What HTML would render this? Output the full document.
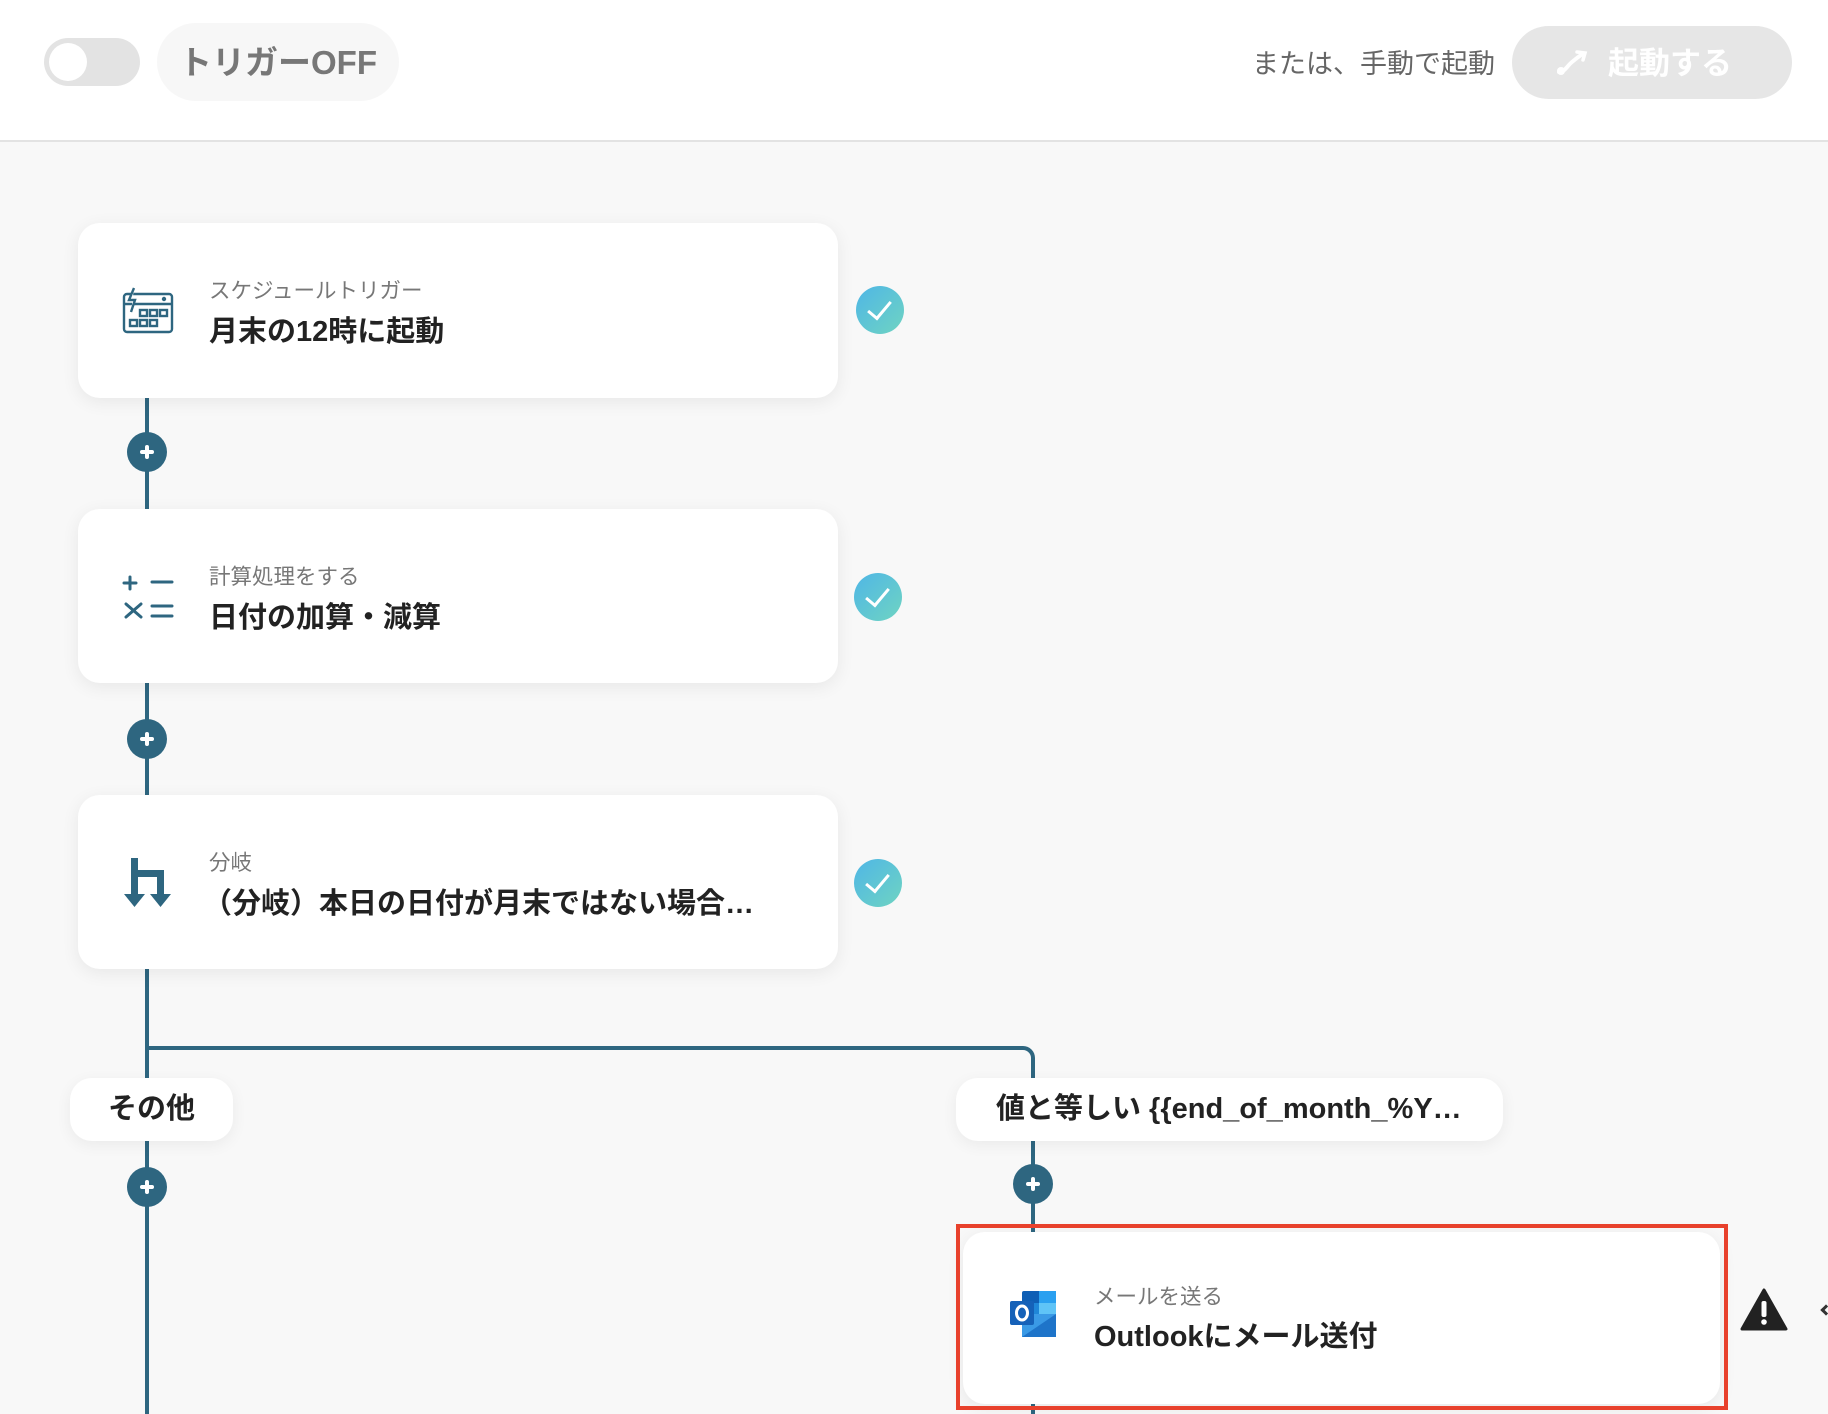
<!DOCTYPE html>
<html><head><meta charset="utf-8"><style>
*{margin:0;padding:0;box-sizing:border-box}
body{width:1828px;height:1414px;overflow:hidden;background:#f8f8f8;font-family:"Liberation Sans","Noto Sans CJK JP",sans-serif;position:relative}
.hdr{position:absolute;left:0;top:0;width:1828px;height:142px;background:#fff;border-bottom:2px solid #e3e3e3}
.abs{position:absolute}
.card{position:absolute;background:#fff;border-radius:22px;box-shadow:0 4px 18px rgba(0,0,0,0.07)}
.sub{position:absolute;font-size:21.5px;color:#777;white-space:nowrap}
.ttl{position:absolute;font-size:29px;font-weight:bold;color:#222;white-space:nowrap}
.chk{position:absolute;width:48px;height:48px;border-radius:50%;background:linear-gradient(135deg,#4fb6e6,#6fd4c2)}
.chk:after{content:"";position:absolute;left:17px;top:10px;width:10px;height:20px;border-right:3px solid #fff;border-bottom:3px solid #fff;transform:rotate(40deg)}
.plus{position:absolute;width:40px;height:40px;border-radius:50%;background:#2e6680}
.plus:before{content:"";position:absolute;left:13px;top:18px;width:14px;height:4px;background:#fff;border-radius:2px}
.plus:after{content:"";position:absolute;left:18px;top:13px;width:4px;height:14px;background:#fff;border-radius:2px}
.vl{position:absolute;width:4px;background:#2e6680}
.pill{position:absolute;background:#fff;border-radius:22px;box-shadow:0 4px 16px rgba(0,0,0,0.06);font-size:29px;font-weight:bold;color:#222;white-space:nowrap}
</style></head><body>
<div class="hdr"></div>
<div class="abs" style="left:44px;top:38px;width:96px;height:48px;border-radius:24px;background:#e3e3e3"></div>
<div class="abs" style="left:49px;top:43px;width:38px;height:38px;border-radius:50%;background:#fff"></div>
<div class="abs" style="left:157px;top:23px;width:242px;height:78px;border-radius:39px;background:#f7f7f7;font-size:33px;font-weight:bold;color:#777;line-height:80px;text-align:center">トリガーOFF</div>
<div class="abs" style="right:333px;top:45px;font-size:27px;color:#666;line-height:38px">または、手動で起動</div>
<div class="abs" style="left:1512px;top:26px;width:280px;height:73px;border-radius:37px;background:#e6e6e6;color:#fff;font-size:31px;font-weight:bold;line-height:76px;padding-left:96px">起動する</div>
<svg class="abs" style="left:1555px;top:48px" width="34" height="30" viewBox="0 0 34 30"><path d="M4 24 C10 24 12 18 17 14 C22 10 24 8 28 6" stroke="#fff" stroke-width="4" fill="none" stroke-linecap="round"/><circle cx="6" cy="23" r="4" fill="#fff"/><path d="M22 4 L30 5 L28 12" stroke="#fff" stroke-width="3.5" fill="none" stroke-linecap="round"/></svg>

<div class="vl" style="left:145px;top:398px;height:111px"></div>
<div class="vl" style="left:145px;top:683px;height:112px"></div>
<div class="vl" style="left:145px;top:969px;height:445px"></div>
<div class="abs" style="left:145px;top:1046px;width:890px;height:30px;border-top:4px solid #2e6680;border-right:4px solid #2e6680;border-top-right-radius:12px"></div>
<div class="vl" style="left:1031px;top:1076px;height:338px"></div>

<div class="plus" style="left:127px;top:432px"></div>
<div class="plus" style="left:127px;top:719px"></div>
<div class="plus" style="left:127px;top:1167px"></div>
<div class="plus" style="left:1013px;top:1164px"></div>

<div class="card" style="left:78px;top:223px;width:760px;height:175px"></div>
<svg class="abs" style="left:122px;top:286px" width="52" height="48" viewBox="0 0 52 48" fill="none" stroke="#2e6680" stroke-width="2.4"><rect x="2" y="8" width="48" height="38" rx="3"/><line x1="2" y1="18" x2="50" y2="18"/><path d="M12 2 L7 14 L13 14 L9 26" fill="#fff"/><rect x="18" y="24" width="7" height="6"/><rect x="28" y="24" width="7" height="6"/><rect x="38" y="24" width="7" height="6"/><rect x="8" y="34" width="7" height="6"/><rect x="18" y="34" width="7" height="6"/><rect x="28" y="34" width="7" height="6"/><circle cx="42" cy="13" r="1" fill="#2e6680"/></svg>
<div class="sub" style="left:209px;top:274px">スケジュールトリガー</div>
<div class="ttl" style="left:209px;top:308px">月末の12時に起動</div>
<div class="chk" style="left:856px;top:286px"></div>

<div class="card" style="left:78px;top:509px;width:760px;height:174px"></div>
<svg class="abs" style="left:122px;top:570px" width="54" height="52" viewBox="0 0 54 52" stroke="#2e6680" stroke-width="3" stroke-linecap="round"><line x1="2" y1="13" x2="14" y2="13"/><line x1="8" y1="7" x2="8" y2="19"/><line x1="30" y1="12" x2="50" y2="12"/><line x1="4" y1="34" x2="19" y2="47"/><line x1="19" y1="34" x2="4" y2="47"/><line x1="30" y1="36" x2="50" y2="36"/><line x1="30" y1="46" x2="50" y2="46"/></svg>
<div class="sub" style="left:209px;top:560px">計算処理をする</div>
<div class="ttl" style="left:209px;top:594px">日付の加算・減算</div>
<div class="chk" style="left:854px;top:573px"></div>

<div class="card" style="left:78px;top:795px;width:760px;height:174px"></div>
<svg class="abs" style="left:124px;top:856px" width="50" height="52" viewBox="0 0 50 52" fill="#2e6680"><rect x="7" y="2" width="7" height="40"/><rect x="7" y="14" width="33" height="7"/><rect x="33" y="14" width="7" height="28"/><path d="M0 38 L21 38 L10.5 51 Z"/><path d="M26 38 L47 38 L36.5 51 Z"/></svg>
<div class="sub" style="left:209px;top:846px">分岐</div>
<div class="ttl" style="left:203px;top:880px">（分岐）本日の日付が月末ではない場合…</div>
<div class="chk" style="left:854px;top:859px"></div>

<div class="pill" style="left:70px;top:1078px;width:163px;height:63px;line-height:63px;text-align:center">その他</div>
<div class="pill" style="left:956px;top:1078px;width:547px;height:63px;line-height:63px;padding-left:40px">値と等しい {{end_of_month_%Y…</div>

<div class="card" style="left:963px;top:1232px;width:757px;height:172px"></div>
<div class="abs" style="left:956px;top:1224px;width:772px;height:186px;border:4px solid #e8412c"></div>
<svg class="abs" style="left:1008px;top:1290px" width="52" height="48" viewBox="0 0 52 48"><rect x="14" y="1" width="34" height="46" rx="2" fill="#0f5fb5"/><rect x="31" y="1" width="17" height="12" fill="#2aa0f0"/><rect x="14" y="13" width="17" height="12" fill="#1f86d8"/><rect x="31" y="13" width="17" height="12" fill="#5fc4f7"/><path d="M14 24 L48 24 L48 47 L14 47 Z" fill="#3a9ae6"/><path d="M14 47 L48 24 L48 47 Z" fill="#1e74c9"/><rect x="2" y="11" width="24" height="24" rx="2" fill="#1561b8"/><ellipse cx="14" cy="23" rx="5.5" ry="7" fill="none" stroke="#fff" stroke-width="3"/></svg>
<div class="sub" style="left:1094px;top:1280px">メールを送る</div>
<div class="ttl" style="left:1094px;top:1313px">Outlookにメール送付</div>
<svg class="abs" style="left:1740px;top:1288px" width="48" height="44" viewBox="0 0 48 44"><path d="M24 2 L46 41 L2 41 Z" fill="#222" stroke="#222" stroke-width="3" stroke-linejoin="round"/><rect x="21.5" y="13" width="5" height="16" rx="2" fill="#fff"/><circle cx="24" cy="34" r="2.8" fill="#fff"/></svg>
<div class="abs" style="left:1822px;top:1306px;width:8px;height:8px;border-left:3px solid #333;border-bottom:3px solid #333;transform:rotate(45deg)"></div>
</body></html>
